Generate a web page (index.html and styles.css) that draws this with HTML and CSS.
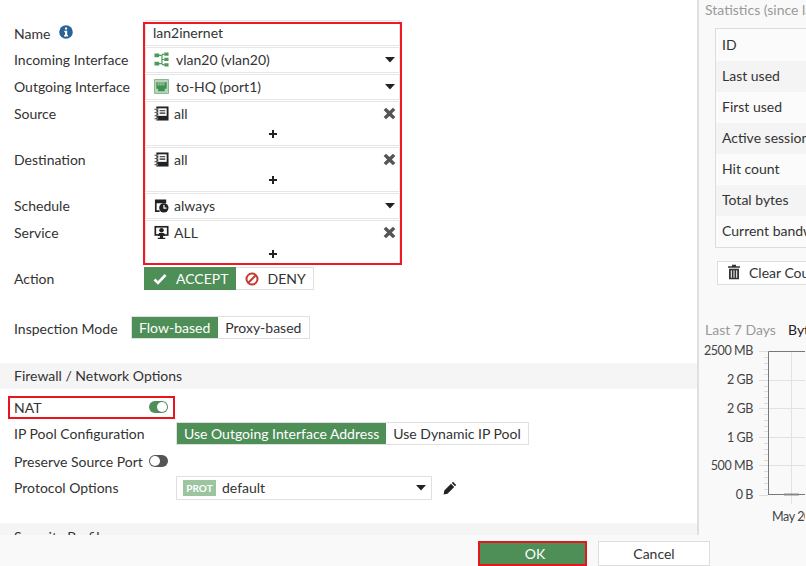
FILE: index.html
```html
<!DOCTYPE html>
<html lang="en">
<head>
<meta charset="utf-8">
<title>Edit Policy</title>
<link rel="stylesheet" href="styles.css">
</head>
<body>
<svg class="defs" width="0" height="0" aria-hidden="true">
  <symbol id="addr" viewBox="0 0 16 16">
    <path d="M2.500 .5h13v15h-13z" fill="#222"/><path d="M4.500 2.500h9v8h-9z" fill="#fff"/><path d="M6 4.500h6v1.200H6zM6 7h6v1.200H6z" fill="#222"/>
    <path d="M.5 3h3.500v1.200H.5zM.5 6.300h3.500v1.200H.5zM.5 9.600h3.500v1.200H.5zM.5 12.900h3.500v1.200H.5z" fill="#222" stroke="#fff" stroke-width=".4"/>
  </symbol>
  <symbol id="x" viewBox="0 0 12 12">
    <path d="M2.800.6 6 3.800 9.200.6l2.200 2.200L8.200 6l3.200 3.200-2.200 2.200L6 8.200l-3.200 3.200L.6 9.200 3.800 6 .6 2.800z" fill="#555"/>
  </symbol>
  <symbol id="caret" viewBox="0 0 10 6"><path d="M0 0h10L5 5.500z" fill="#222"/></symbol>
  <symbol id="plus" viewBox="0 0 8 8"><path d="M3 0h2v3h3v2H5v3H3V5H0V3h3z" fill="#222"/></symbol>
</svg>

<div class="main">
  <form class="form">
    <div class="fields-mark"></div>

    <div class="row">
      <span class="label label-info">Name
        <svg class="info" viewBox="0 0 14 14" width="14" height="14"><circle cx="7" cy="7" r="6.800" fill="#2a6496"/><path d="M6 2.600h2.100v2H6zM5.300 5.800h2.900v4.200h.8v1.400H5.100V10h.9V7.200h-.7z" fill="#fff"/></svg>
      </span>
      <div class="field"><span class="value plain">lan2inernet</span></div>
    </div>

    <div class="row">
      <span class="label">Incoming Interface</span>
      <div class="field">
        <svg class="icon" viewBox="0 0 16 16" width="16" height="16"><path d="M.5 1.500h5v4h-5zM.5 10.500h5v4h-5zM11 .5h4.500v3.500H11zM11 6.200h4.500v3.500H11zM11 12h4.500v3.500H11z" fill="#4e9a5b"/><path d="M5 3.500h3.500v9H5M8.500 8H11M8.500 2.500H11M8.500 13.500H11" fill="none" stroke="#4e9a5b" stroke-width="1.300"/></svg>
        <span class="value wide">vlan20 (vlan20)</span>
        <svg class="caret"><use href="#caret"/></svg>
      </div>
    </div>

    <div class="row">
      <span class="label">Outgoing Interface</span>
      <div class="field">
        <svg class="icon" viewBox="0 0 16 16" width="16" height="16"><path d="M.5.5h15v15H.5z" fill="#b5d6b8" stroke="#7fb386"/><path d="M2.500 3.500h11v7h-2v2.500h-7v-2.500h-2z" fill="#3f8f50"/><path d="M4.500 3.500v3.500M6.500 3.500v3.500M8.500 3.500v3.500M10.500 3.500v3.500" stroke="#d5ead7" stroke-width=".8"/></svg>
        <span class="value wide">to-HQ (port1)</span>
        <svg class="caret"><use href="#caret"/></svg>
      </div>
    </div>

    <div class="row row-multi">
      <span class="label">Source</span>
      <div class="field field-multi">
        <div class="entry">
          <svg class="icon"><use href="#addr"/></svg>
          <span class="value">all</span>
          <svg class="remove"><use href="#x"/></svg>
        </div>
        <svg class="plus"><use href="#plus"/></svg>
      </div>
    </div>

    <div class="row row-multi">
      <span class="label">Destination</span>
      <div class="field field-multi">
        <div class="entry">
          <svg class="icon"><use href="#addr"/></svg>
          <span class="value">all</span>
          <svg class="remove"><use href="#x"/></svg>
        </div>
        <svg class="plus"><use href="#plus"/></svg>
      </div>
    </div>

    <div class="row">
      <span class="label">Schedule</span>
      <div class="field">
        <svg class="icon" viewBox="0 0 16 16" width="16" height="16"><path d="M1 1.500h12v4H2.800v7.500H6V15H1z" fill="#222"/><circle cx="10.500" cy="10.500" r="5" fill="#222"/><path d="M10 7.500h1.300v2.700h2v1.300H10z" fill="#fff"/></svg>
        <span class="value">always</span>
        <svg class="caret"><use href="#caret"/></svg>
      </div>
    </div>

    <div class="row row-multi">
      <span class="label">Service</span>
      <div class="field field-multi">
        <div class="entry">
          <svg class="icon" viewBox="0 0 16 16" width="16" height="16"><path d="M.5 1h15v10.500H.5z" fill="#222"/><path d="M2.300 2.800h11.400v7H2.300z" fill="#fff"/><circle cx="8" cy="5.600" r="2.400" fill="#222"/><path d="M4 11.500 5.300 8.500h5.400l1.300 3zM6.300 11h3.400v2.500H12V15H4v-1.500h2.300z" fill="#222"/></svg>
          <span class="value">ALL</span>
          <svg class="remove"><use href="#x"/></svg>
        </div>
        <svg class="plus plus-last"><use href="#plus"/></svg>
      </div>
    </div>

    <div class="row row-action">
      <span class="label label-action">Action</span>
      <div class="toggle">
        <span class="opt on opt-accept">
          <svg viewBox="0 0 14 12" width="14" height="12"><path d="M1.500 6.500 5 10l7.500-8" fill="none" stroke="#fff" stroke-width="2.600"/></svg>
          ACCEPT
        </span>
        <span class="opt opt-deny">
          <svg viewBox="0 0 14 14" width="14" height="14"><circle cx="7" cy="7" r="5.500" fill="none" stroke="#c83a32" stroke-width="2"/><path d="M3 11 11 3" stroke="#c83a32" stroke-width="2"/></svg>
          DENY
        </span>
      </div>
    </div>

    <div class="row row-inspect">
      <span class="label">Inspection Mode</span>
      <div class="toggle">
        <span class="opt on opt-flow">Flow-based</span>
        <span class="opt opt-proxy">Proxy-based</span>
      </div>
    </div>

    <div class="section">Firewall / Network Options</div>

    <div class="nat-mark"></div>
    <div class="row row-nat">
      <span class="label">NAT</span>
      <span class="switch switch-on"></span>
    </div>
    <div class="row row-pool">
      <span class="label">IP Pool Configuration</span>
      <div class="toggle">
        <span class="opt on">Use Outgoing Interface Address</span>
        <span class="opt">Use Dynamic IP Pool</span>
      </div>
    </div>
    <div class="row row-nat">
      <span class="label">Preserve Source Port</span>
      <span class="switch"></span>
    </div>
    <div class="row row-pool">
      <span class="label">Protocol Options</span>
      <div class="select">
        <span class="prot">PROT</span>
        <span class="value">default</span>
        <svg class="caret"><use href="#caret"/></svg>
      </div>
      <svg class="pencil" viewBox="0 0 14 14" width="14" height="14"><path d="M10 .8 13.200 4 12 5.200 8.800 2zM8 2.800 11.200 6 4.500 12.700.6 13.400l.7-3.900z" fill="#222"/></svg>
    </div>

    <div class="section section-next">Security Profiles</div>
  </form>

  <aside class="stats">
    <div class="stats-title">Statistics (since last reset)</div>
    <div class="stats-table">
      <div class="stat stat-tall">ID</div>
      <div class="stat alt">Last used</div>
      <div class="stat">First used</div>
      <div class="stat alt">Active sessions</div>
      <div class="stat">Hit count</div>
      <div class="stat alt">Total bytes</div>
      <div class="stat">Current bandwidth</div>
    </div>
    <div class="clear">
      <svg viewBox="0 0 14 16" width="14" height="16"><path d="M5 .8h4v1.500h4v1.500H1V2.300h4zM2 4.800h10V15.200H2z" fill="#333"/><path d="M4.300 6.300v7.500M7 6.300v7.500M9.700 6.300v7.500" stroke="#fff" stroke-width="1"/></svg>
      Clear Counters
    </div>
    <div class="range"><span class="range-label">Last 7 Days</span><span class="range-kind">Bytes</span></div>
    <svg class="chart" width="108" height="190" viewBox="698 340 108 190">
      <g stroke="#e2e2e2"><path d="M769 380.500h37M769 408.500h37M769 437.500h37M769 465.500h37M792.500 351v144"/><path d="M792.500 495v9"/></g>
      <g stroke="#ddd"><path d="M760 351.500h9M760 380.500h9M760 408.500h9M760 437.500h9M760 465.500h9M760 495.500h9"/>
        <path d="M765 357.500h4M765 363.500h4M765 369.500h4M765 374.500h4M765 386.500h4M765 391.500h4M765 397.500h4M765 403.500h4M765 414.500h4M765 420.500h4M765 426.500h4M765 431.500h4M765 443.500h4M765 449.500h4M765 454.500h4M765 460.500h4M765 471.500h4M765 477.500h4M765 483.500h4M765 489.500h4"/></g>
      <path d="M769.500 495V351.500H806M769 494.500h37" fill="none" stroke="#777"/>
      <path d="M785 494.500h15" stroke="#888" stroke-width="2"/>
      <g class="tick" text-anchor="end">
        <text x="754" y="355">2500 MB</text><text x="754" y="384">2 GB</text><text x="754" y="413">2 GB</text><text x="754" y="442">1 GB</text><text x="754" y="470">500 MB</text><text x="754" y="499">0 B</text>
      </g>
      <text class="tick" x="773" y="521">May 20</text>
    </svg>
  </aside>
</div>

<footer class="footer">
  <span class="btn btn-ok">OK</span>
  <span class="btn btn-cancel">Cancel</span>
</footer>
</body>
</html>
```

FILE: styles.css
```css
* { box-sizing: border-box; }
html, body { margin: 0; height: 100%; }
body {
  width: 806px;
  height: 566px;
  overflow: hidden;
  display: flex;
  flex-direction: column;
  background: #f9f9f9;
  font-family: Lato, "Noto Sans", sans-serif;
  font-size: 14px;
  color: #333;
}
.defs { position: absolute; }
.main { height: 535px; display: flex; overflow: hidden; }
.form {
  position: relative;
  width: 697px;
  flex: none;
  background: #fff;
  padding-top: 20px;
}
.fields-mark {
  position: absolute; left: 143px; top: 22px; width: 259px; height: 243px;
  border: 2px solid #f01822; z-index: 2; pointer-events: none;
}
.nat-mark {
  position: absolute; left: 8px; top: 396px; width: 167px; height: 23px;
  border: 2px solid #e8141e; z-index: 2; pointer-events: none;
}
.row { display: flex; align-items: flex-start; padding-left: 14px; margin-bottom: 1px; }
.label { width: 131px; flex: none; line-height: 25px; white-space: nowrap; }
.label-info { display: flex; align-items: center; gap: 9px; height: 26px; }
.info { margin-top: -2px; }
.field {
  width: 255px; height: 26px; display: flex; align-items: center;
  border: 1px solid #e6e6e6; padding: 0 4px 0 8px; background: #fff;
}
.field-multi { height: 45px; display: block; padding: 0; margin-bottom: 0; }
.row-multi { margin-bottom: 1px; }
.entry { height: 24px; display: flex; align-items: center; padding: 0 3px 0 8px; }
.icon { width: 15px; height: 15px; flex: none; margin-top: -1px; }
.value { margin-left: 5px; line-height: 22px; color: #333; }
.wide { margin-left: 7px; }
.plain { margin-left: -1px; }
.caret { width: 10px; height: 6px; margin-left: auto; }
.remove { width: 13px; height: 13px; margin-left: auto; margin-top: -2px; }
.plus { width: 8px; height: 8px; display: block; margin: 4px auto 0; }
.plus-last { margin-top: 5px; }
.row-action { margin-top: 2px; height: 48px; }
.label-action { margin-top: -1px; }
.row-inspect { height: 46px; }
.row-inspect .label { width: 117px; }
.toggle { display: inline-flex; height: 23px; border: 1px solid #e0e0e0; background: #fff; }
.row-action .toggle { margin-left: -1px; }
.opt { display: flex; align-items: center; gap: 7px; padding: 0 7px; color: #333; white-space: nowrap; }
.on { background: #4e8e57; color: #fff; }
.opt-accept { padding: 0 7px 0 9px; gap: 9px; margin: -1px 0 -1px -1px; }
.opt-deny { padding: 0 7px 0 9px; gap: 9px; }
.opt-flow { padding-right: 8px; }
.opt-proxy { padding-right: 8px; }
.section {
  background: #f5f5f5; height: 26px; line-height: 26px; padding-left: 14px;
  margin: 0 0 5px;
}
.section-next { height: 28px; line-height: 28px; margin-top: 22px; }
.row-nat { height: 26px; margin-bottom: 1px; align-items: center; }
.row-nat .label { width: 135px; }
.row-pool { height: 26px; margin-bottom: 1px; }
.row-pool .label { width: 162px; }
.row-pool .toggle { margin-top: 1px; }
.switch {
  position: relative; width: 19px; height: 12px; border-radius: 6px; background: #555; flex: none;
}
.switch::after {
  content: ""; position: absolute; left: 1px; top: 1px; width: 10px; height: 10px; border-radius: 50%; background: #fff;
}
.switch-on { background: #4e8e57; }
.switch-on::after { left: 8px; }
.select {
  width: 256px; height: 24px; display: flex; align-items: center; margin-top: 1px;
  border: 1px solid #e0e0e0; padding: 0 5px 0 6px; background: #fff;
}
.prot {
  background: #9bc49f; color: #fff; font-size: 10px; font-weight: 700; width: 33px; height: 16px;
  line-height: 16px; text-align: center; flex: none;
}
.select .value { margin-left: 6px; }
.pencil { margin: 6px 0 0 11px; }
.stats {
  flex: 1; min-width: 0; border-left: 2px solid #e0e0e0; background: #f9f9f9; padding: 0 0 0 6px;
  position: relative;
}
.stats-title { height: 28px; padding-top: 1px; line-height: 18px; color: #999; white-space: nowrap; }
.stats-table {
  width: 120px; margin-left: 10px; height: 220px; border: 1px solid #ddd; border-right: 0; background: #fbfbfb;
  display: flex; flex-direction: column;
}
.stat { flex: 1; padding: 0 0 2px 6px; display: flex; align-items: center; white-space: nowrap; overflow: hidden; }
.stat-tall { flex: none; height: 32px; }
.alt { background: #f4f4f4; }
.clear {
  margin: 13px 0 0 12px; width: 100px; height: 24px; border: 1px solid #ddd; border-right: 0; background: #fff;
  display: flex; align-items: center; gap: 8px; padding: 0 0 2px 9px; white-space: nowrap; overflow: hidden;
}
.clear svg { flex: none; }
.range { margin-top: 36px; height: 20px; display: flex; line-height: 18px; white-space: nowrap; }
.range-label { color: #999; width: 83px; flex: none; }
.range-kind { color: #222; }
.chart { position: absolute; left: -2px; top: 340px; }
.tick { font-family: Lato, sans-serif; font-size: 12.500px; letter-spacing: -.4px; fill: #444; }
.footer {
  height: 31px; display: flex; align-items: flex-start; padding: 6px 0 0 478px; gap: 11px; background: #f9f9f9;
}
.btn { height: 25px; display: flex; align-items: center; justify-content: center; }
.btn-ok { width: 109px; background: #4e8e57; color: #fff; border: 2px solid #e8141e; padding-left: 5px; }
.btn-cancel { width: 112px; background: #fff; border: 1px solid #ddd; color: #333; }
```
